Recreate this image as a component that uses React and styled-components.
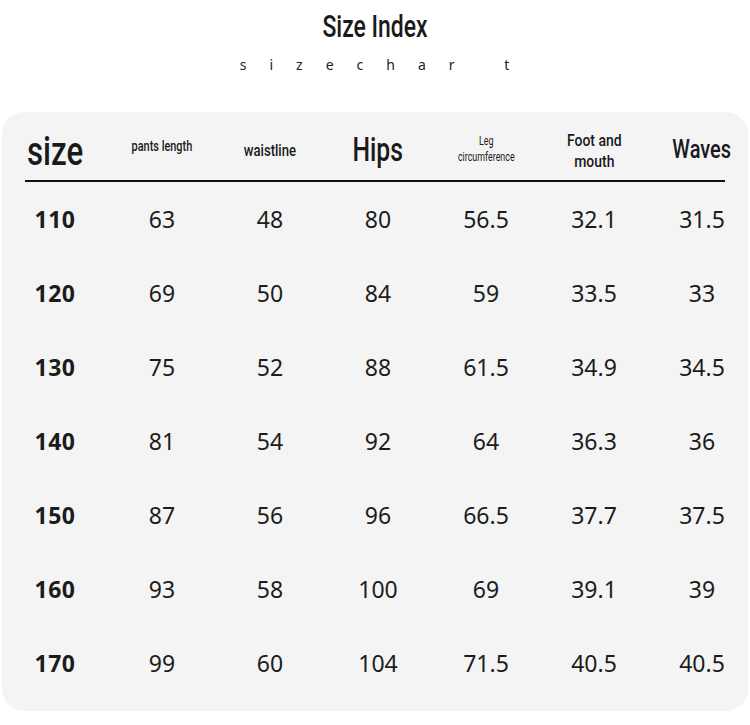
import React from "react";
import styled, { createGlobalStyle } from "styled-components";

const Global = createGlobalStyle`
  html, body { margin: 0; padding: 0; background: #ffffff; }
  body { font-family: "Noto Sans", "Liberation Sans", sans-serif; color: #1a1a1a; }
`;

const Page = styled.div`
  width: 750px;
  height: 725px;
  overflow: hidden;
  display: flex;
  flex-direction: column;
  align-items: center;
`;

const Title = styled.div`
  margin-top: 8px;
  height: 38px;
  display: flex;
  align-items: center;
  justify-content: center;
`;

const Cond = styled.span`
  display: inline-block;
  font-family: Roboto, "Liberation Sans", sans-serif;
  font-weight: ${(p) => p.$weight || 500};
  font-size: ${(p) => p.$size}px;
  line-height: ${(p) => p.$lh || 1.2};
  transform: scaleX(${(p) => p.$sx || 0.75});
  transform-origin: center;
  text-align: center;
  white-space: pre;
  color: #1a1a1a;
`;

const Sub = styled.div`
  margin-top: 9px;
  margin-left: 22px;
  font-family: "Noto Sans", sans-serif;
  font-size: 14px;
  letter-spacing: 23px;
  white-space: pre;
  color: #222;
  line-height: 20px;
`;

const Panel = styled.div`
  margin-top: 37px;
  align-self: flex-start;
  margin-left: 2px;
  width: 746px;
  background: #f4f4f4;
  border-radius: 22px;
  padding-bottom: 11px;
`;

const Row = styled.div`
  display: grid;
  grid-template-columns: 106px repeat(6, 108px);
  height: ${(p) => p.$h}px;
  align-items: center;
  justify-items: center;
`;

const Rule = styled.div`
  height: 2px;
  background: #111;
  margin: 0 23px;
`;

const HeadCell = styled.div`
  display: flex;
  justify-content: center;
  align-items: center;
  padding-top: ${(p) => p.$pt || 0}px;
`;

const Num = styled.div`
  font-family: "Noto Sans", "Liberation Sans", sans-serif;
  font-size: 23px;
  font-weight: ${(p) => (p.$bold ? 700 : 400)};
  color: #1c1c1c;
  letter-spacing: ${(p) => (p.$bold ? "0.5px" : "0")};
`;

const data = [
  ["110", "63", "48", "80", "56.5", "32.1", "31.5"],
  ["120", "69", "50", "84", "59", "33.5", "33"],
  ["130", "75", "52", "88", "61.5", "34.9", "34.5"],
  ["140", "81", "54", "92", "64", "36.3", "36"],
  ["150", "87", "56", "96", "66.5", "37.7", "37.5"],
  ["160", "93", "58", "100", "69", "39.1", "39"],
  ["170", "99", "60", "104", "71.5", "40.5", "40.5"],
];

export default function App() {
  return (
    <Page>
      <Global />
      <Title>
        <Cond $size={31} $sx={0.74}>Size Index</Cond>
      </Title>
      <Sub>sizechar t</Sub>
      <Panel>
        <Row $h={68}>
          <HeadCell $pt={12}>
            <Cond $size={40} $sx={0.78}>size</Cond>
          </HeadCell>
          <HeadCell $pt={0}>
            <Cond $size={14} $sx={0.78}>pants length</Cond>
          </HeadCell>
          <HeadCell $pt={10}>
            <Cond $size={16} $sx={0.82}>waistline</Cond>
          </HeadCell>
          <HeadCell $pt={8}>
            <Cond $size={33} $sx={0.75}>Hips</Cond>
          </HeadCell>
          <HeadCell $pt={6}>
            <Cond $size={12} $sx={0.74} $lh={1.35} $weight={400}>{"Leg\ncircumference"}</Cond>
          </HeadCell>
          <HeadCell $pt={10}>
            <Cond $size={17} $sx={0.82} $lh={1.25}>{"Foot and\nmouth"}</Cond>
          </HeadCell>
          <HeadCell $pt={8}>
            <Cond $size={25} $sx={0.8}>Waves</Cond>
          </HeadCell>
        </Row>
        <Rule />
        {data.map((r) => (
          <Row key={r[0]} $h={74}>
            {r.map((v, i) => (
              <Num key={i} $bold={i === 0}>{v}</Num>
            ))}
          </Row>
        ))}
      </Panel>
    </Page>
  );
}
